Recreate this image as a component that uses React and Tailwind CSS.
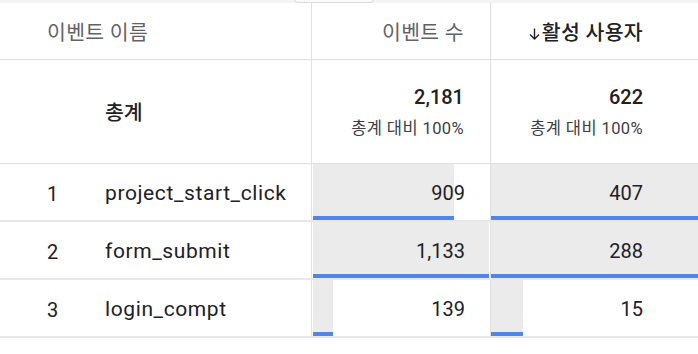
import React from 'react';

const rows = [
  { rank: 1, name: 'project_start_click', events: '909', eventsPct: 141, users: '407', usersPct: 207 },
  { rank: 2, name: 'form_submit', events: '1,133', eventsPct: 176, users: '288', usersPct: 207 },
  { rank: 3, name: 'login_compt', events: '139', eventsPct: 20, users: '15', usersPct: 32 },
];

const BarCell = ({ value, width }) => (
  <div className="relative h-full">
    <div className="absolute left-0 top-0 bottom-0 bg-[#ebebeb]" style={{ width }}>
      <div className="absolute left-0 right-0 bottom-0 h-[4px] bg-[#4f86ea]" />
    </div>
    <div className="relative h-full flex items-center justify-end pt-[1px]">{value}</div>
  </div>
);

const App = () => {
  return (
    <div
      className="relative w-[698px] h-[354px] overflow-hidden bg-white text-[#202124]"
      style={{ fontFamily: 'Roboto, "Noto Sans CJK KR", sans-serif' }}
    >
      {/* top strip with the edge of a popup */}
      <div className="h-[3px] bg-[#f4f4f4]" />
      <div className="absolute left-[294px] top-[-6px] w-[80px] h-[9px] rounded-b-[4px] border border-[#d9d9d9] bg-[#fafafa]" />

      {/* header */}
      <div className="flex h-[57px] border-b border-[#e0e0e0] text-[20.5px] tracking-[0.3px]">
        <div className="w-[311px] flex items-center pl-[47px] pt-[5px] text-[#5f6368]">이벤트 이름</div>
        <div className="w-[179px] border-l border-[#e0e0e0] flex items-center justify-end pr-[26px] pt-[5px] text-[#5f6368]">
          이벤트 수
        </div>
        <div className="flex-1 border-l border-[#e0e0e0] flex items-center justify-end pr-[55px] pt-[5px] font-medium text-[#202124]">
          <svg width="13" height="12" viewBox="0 0 13 12" className="mr-[1px] mt-[1px]">
            <path d="M6.5 0.5V11M2 6.5L6.5 11L11 6.5" fill="none" stroke="#202124" strokeWidth="1.4" />
          </svg>
          활성 사용자
        </div>
      </div>

      {/* totals */}
      <div className="flex h-[104px] border-b border-[#e0e0e0]">
        <div className="w-[311px] flex items-center pl-[105px] pt-[3px] text-[20.5px] font-medium">총계</div>
        <div className="w-[179px] border-l border-[#e0e0e0] flex flex-col items-end justify-center pr-[26px] pt-[1px]">
          <div className="text-[20px] font-medium leading-[24px]">2,181</div>
          <div className="text-[16.5px] tracking-[0.4px] text-[#3c4043] leading-[20px] mt-[10px]">총계 대비 100%</div>
        </div>
        <div className="flex-1 border-l border-[#e0e0e0] flex flex-col items-end justify-center pr-[55px] pt-[1px]">
          <div className="text-[20px] font-medium leading-[24px]">622</div>
          <div className="text-[16.5px] tracking-[0.4px] text-[#3c4043] leading-[20px] mt-[10px]">총계 대비 100%</div>
        </div>
      </div>

      {/* rows */}
      {rows.map((row) => (
        <div key={row.rank} className="flex h-[58px] border-b-2 border-[#e8e8e8] text-[#202124]">
          <div className="w-[311px] flex items-center pt-[3px]">
            <div className="w-[105px] text-center text-[20px]">{row.rank}</div>
            <div className="text-[21px] tracking-[0.6px]">{row.name}</div>
          </div>
          <div className="w-[179px] border-l border-[#e0e0e0] pl-[1px] text-[20px]">
            <BarCell value={<span className="pr-[25px]">{row.events}</span>} width={row.eventsPct} />
          </div>
          <div className="flex-1 border-l border-[#e0e0e0] text-[20px]">
            <BarCell value={<span className="pr-[55px]">{row.users}</span>} width={row.usersPct} />
          </div>
        </div>
      ))}
    </div>
  );
};

export default App;
